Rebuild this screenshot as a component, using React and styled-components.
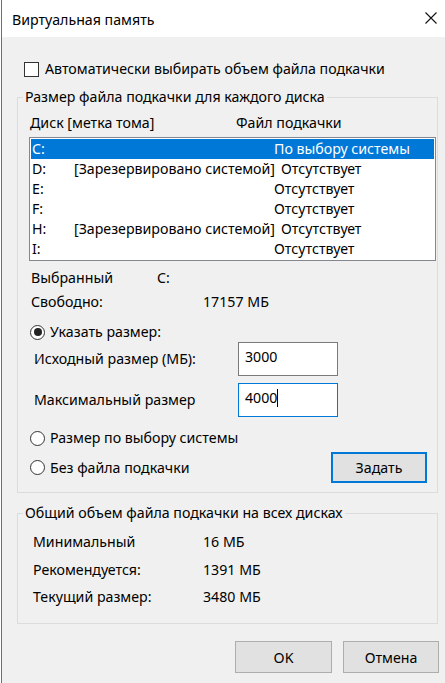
import React from "react";
import styled, { createGlobalStyle } from "styled-components";

const Global = createGlobalStyle`
  html, body { margin: 0; padding: 0; background: #fff; }
  body {
    font-family: "Segoe UI", "Noto Sans", "Open Sans", sans-serif;
    font-size: 14.2px;
    color: #000;
  }
  * { box-sizing: border-box; }
`;

const Window = styled.div`
  margin-left: 1px;
  border-left: 1px solid #2a7fd4;
  height: 683px;
  background: #f0f0f0;
  display: flex;
  flex-direction: column;
  overflow: hidden;
`;

const TitleBar = styled.div`
  height: 37px;
  flex: none;
  background: #fff;
  display: flex;
  align-items: center;
  justify-content: space-between;
  padding: 3px 8px 0 10px;
`;

const Title = styled.span`
  line-height: 20px;
`;

const CloseIcon = styled.svg`
  width: 12px;
  height: 12px;
  margin-top: -5px;
`;

const Body = styled.div`
  display: flex;
  flex-direction: column;
  padding: 0 0 0 15px;
`;

const CheckRow = styled.label`
  margin-top: 22px;
  height: 20px;
  display: flex;
  align-items: center;
  gap: 6px;
  padding-left: 7px;
  line-height: 20px;
`;

const CheckBox = styled.span`
  width: 15px;
  height: 15px;
  border: 1px solid #333;
  background: #fff;
  flex: none;
`;

const Group = styled.fieldset`
  margin: ${(p) => p.$top}px 0 0 0;
  width: 421px;
  min-width: 0;
  border: 1px solid #dcdcdc;
  padding: 0;
`;

const Legend = styled.legend`
  margin-left: 5px;
  padding: 0 2px;
  line-height: 20px;
`;

const GroupBody = styled.div`
  display: flex;
  flex-direction: column;
  padding: ${(p) => p.$pad};
`;

const ColumnHeader = styled.div`
  display: flex;
  height: 20px;
  line-height: 20px;
  padding-left: 1px;
`;

const HeaderCell = styled.span`
  width: ${(p) => p.$w || "auto"};
`;

const ListBox = styled.div`
  margin-top: 4px;
  height: 124px;
  border: 1px solid #828790;
  background: #fff;
  padding: 1px 0;
`;

const ListRow = styled.div`
  display: flex;
  height: 20px;
  line-height: 20px;
  margin: 0 1px;
  padding-left: 1px;
  white-space: nowrap;
  background: ${(p) => (p.$selected ? "#0078d7" : "transparent")};
  color: ${(p) => (p.$selected ? "#fff" : "#000")};
`;

const DriveCell = styled.span`
  width: 42px;
  flex: none;
`;

const LabelCell = styled.span`
  min-width: 200px;
  padding-right: ${(p) => (p.$filled ? "6px" : "0")};
  flex: none;
`;

const InfoRow = styled.div`
  display: flex;
  height: 20px;
  line-height: 20px;
  margin-top: ${(p) => p.$top}px;
  padding-left: ${(p) => p.$indent}px;
`;

const InfoLabel = styled.span`
  width: ${(p) => p.$w}px;
  flex: none;
`;

const RadioRow = styled.div`
  display: flex;
  align-items: center;
  justify-content: space-between;
  height: ${(p) => p.$h || 20}px;
  margin-top: ${(p) => p.$top}px;
`;

const RadioLabel = styled.label`
  display: flex;
  align-items: center;
  gap: 5px;
  padding-left: 1px;
  line-height: 20px;
`;

const Radio = styled.span`
  width: 15px;
  height: 15px;
  flex: none;
  border-radius: 50%;
  border: 1px solid #333;
  background: #fff;
  display: flex;
  align-items: center;
  justify-content: center;
  &::after {
    content: "";
    width: 8px;
    height: 8px;
    border-radius: 50%;
    background: ${(p) => (p.$checked ? "#222" : "transparent")};
  }
`;

const SizeRow = styled.div`
  display: flex;
  align-items: center;
  height: 34px;
  margin-top: ${(p) => p.$top}px;
`;

const SizeLabel = styled.span`
  width: 209px;
  flex: none;
  padding-left: 5px;
  line-height: 20px;
`;

const TextBox = styled.div`
  width: 100px;
  height: 34px;
  background: #fff;
  border: 1px solid ${(p) => (p.$focused ? "#0078d7" : "#7a7a7a")};
  padding: 4px 6px;
  line-height: 20px;
  display: flex;
  align-items: flex-start;
`;

const Caret = styled.span`
  width: 1px;
  height: 18px;
  margin-top: 1px;
  background: #000;
`;

const Button = styled.button`
  width: ${(p) => p.$w}px;
  height: ${(p) => p.$h}px;
  background: #e1e1e1;
  border: ${(p) => (p.$default ? "2px solid #0078d7" : "1px solid #adadad")};
  font: inherit;
  color: #000;
  padding: 0;
  margin-right: ${(p) => p.$mr || 0}px;
`;

const ButtonRow = styled.div`
  display: flex;
  justify-content: flex-end;
  gap: 11px;
  margin-top: 17px;
  padding-right: 6px;
`;

const drives = [
  { d: "C:", label: "", file: "По выбору системы", sel: true },
  { d: "D:", label: "[Зарезервировано системой]", file: "Отсутствует" },
  { d: "E:", label: "", file: "Отсутствует" },
  { d: "F:", label: "", file: "Отсутствует" },
  { d: "H:", label: "[Зарезервировано системой]", file: "Отсутствует" },
  { d: "I:", label: "", file: "Отсутствует" },
];

export default function App() {
  return (
    <>
      <Global />
      <Window>
        <TitleBar>
          <Title>Виртуальная память</Title>
          <CloseIcon viewBox="0 0 12 12">
            <path d="M0.5 0.5 L11.5 11.5 M11.5 0.5 L0.5 11.5" stroke="#111" strokeWidth="1.1" fill="none" />
          </CloseIcon>
        </TitleBar>
        <Body>
          <CheckRow>
            <CheckBox />
            Автоматически выбирать объем файла подкачки
          </CheckRow>

          <Group $top={8}>
            <Legend>Размер файла подкачки для каждого диска</Legend>
            <GroupBody $pad="6px 1px 9px 11px">
              <ColumnHeader>
                <HeaderCell $w="206px">Диск [метка тома]</HeaderCell>
                <HeaderCell>Файл подкачки</HeaderCell>
              </ColumnHeader>
              <ListBox>
                {drives.map((r) => (
                  <ListRow key={r.d} $selected={r.sel}>
                    <DriveCell>{r.d}</DriveCell>
                    <LabelCell $filled={!!r.label}>{r.label}</LabelCell>
                    <span>{r.file}</span>
                  </ListRow>
                ))}
              </ListBox>

              <InfoRow $top={7} $indent={2}>
                <InfoLabel $w={126}>Выбранный</InfoLabel>
                <span>C:</span>
              </InfoRow>
              <InfoRow $top={4} $indent={2}>
                <InfoLabel $w={172}>Свободно:</InfoLabel>
                <span>17157 МБ</span>
              </InfoRow>

              <RadioRow $top={10}>
                <RadioLabel>
                  <Radio $checked />
                  Указать размер:
                </RadioLabel>
              </RadioRow>
              <SizeRow $top={0}>
                <SizeLabel>Исходный размер (МБ):</SizeLabel>
                <TextBox>3000</TextBox>
              </SizeRow>
              <SizeRow $top={7}>
                <SizeLabel>Максимальный размер</SizeLabel>
                <TextBox $focused>
                  4000
                  <Caret />
                </TextBox>
              </SizeRow>
              <RadioRow $top={11}>
                <RadioLabel>
                  <Radio />
                  Размер по выбору системы
                </RadioLabel>
              </RadioRow>
              <RadioRow $top={4} $h={31}>
                <RadioLabel>
                  <Radio />
                  Без файла подкачки
                </RadioLabel>
                <Button $w={96} $h={31} $default $mr={9}>
                  Задать
                </Button>
              </RadioRow>
            </GroupBody>
          </Group>

          <Group $top={10}>
            <Legend>Общий объем файла подкачки на всех дисках</Legend>
            <GroupBody $pad="9px 0 16px 15px">
              <InfoRow $top={0} $indent={0}>
                <InfoLabel $w={170}>Минимальный</InfoLabel>
                <span>16 МБ</span>
              </InfoRow>
              <InfoRow $top={7.5} $indent={0}>
                <InfoLabel $w={170}>Рекомендуется:</InfoLabel>
                <span>1391 МБ</span>
              </InfoRow>
              <InfoRow $top={7.5} $indent={0}>
                <InfoLabel $w={170}>Текущий размер:</InfoLabel>
                <span>3480 МБ</span>
              </InfoRow>
            </GroupBody>
          </Group>

          <ButtonRow>
            <Button $w={97} $h={32}>OK</Button>
            <Button $w={96} $h={32}>Отмена</Button>
          </ButtonRow>
        </Body>
      </Window>
    </>
  );
}
